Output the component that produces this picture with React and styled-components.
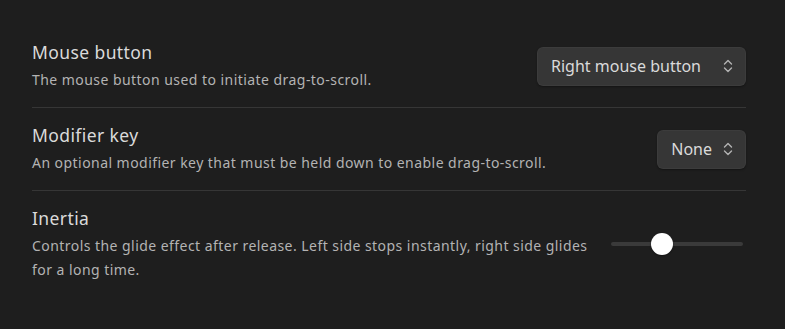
import React, { useState } from 'react';
import styled, { createGlobalStyle } from 'styled-components';

const GlobalStyle = createGlobalStyle`
    html, body {
        margin: 0;
        padding: 0;
        background: #1e1e1e;
    }
    body {
        font-family: "Noto Sans", "Open Sans", sans-serif;
        -webkit-font-smoothing: antialiased;
    }
`;

const Page = styled.div`
    width: 785px;
    height: 329px;
    box-sizing: border-box;
    padding: 25px 39px 0 32px;
    background: #1e1e1e;
`;

const Item = styled.div`
    display: flex;
    align-items: center;
    justify-content: space-between;
    padding: 15px 0;
    border-top: ${p => (p.$first ? 'none' : '1px solid #363636')};
`;

const Info = styled.div`
    flex: 1;
    max-width: 570px;
    margin-right: 4px;
`;

const Name = styled.div`
    color: #dadada;
    font-size: 17.5px;
    letter-spacing: 0.4px;
    line-height: 24px;
    margin-bottom: 4px;
`;

const Description = styled.div`
    color: #b3b3b3;
    font-size: 14px;
    letter-spacing: 0.45px;
    line-height: 24px;
`;

const Select = styled.div`
    display: flex;
    align-items: center;
    gap: ${p => p.$gap}px;
    height: 39px;
    box-sizing: border-box;
    padding: 0 13px 0 14px;
    background: #363636;
    border-radius: 6px;
    box-shadow: 0 1px 2px rgba(0, 0, 0, 0.35), inset 0 0 0 1px rgba(255, 255, 255, 0.03);
    color: #dadada;
    font-size: 16px;
    white-space: nowrap;
`;

const Track = styled.div`
    position: relative;
    flex: none;
    width: 132px;
    height: 4px;
    margin-right: 3px;
    border-radius: 2px;
    background: #3a3a3a;
`;

const Thumb = styled.div`
    position: absolute;
    top: 50%;
    width: 22px;
    height: 22px;
    border-radius: 50%;
    background: #ffffff;
    transform: translate(-50%, -50%);
    box-shadow: 0 1px 2px rgba(0, 0, 0, 0.4);
`;

function Chevrons() {
    return (
        <svg width="10" height="14" viewBox="0 0 10 14" fill="none" stroke="#b3b3b3" strokeWidth="1.4" strokeLinecap="round" strokeLinejoin="round">
            <path d="M1.5 5 L5 1.5 L8.5 5" />
            <path d="M1.5 9 L5 12.5 L8.5 9" />
        </svg>
    );
}

function App() {
    const [inertia] = useState(0.39);

    return (
        <Page>
            <GlobalStyle />
            <Item $first>
                <Info>
                    <Name>Mouse button</Name>
                    <Description>The mouse button used to initiate drag-to-scroll.</Description>
                </Info>
                <Select $gap={22}>Right mouse button <Chevrons /></Select>
            </Item>
            <Item>
                <Info>
                    <Name>Modifier key</Name>
                    <Description>An optional modifier key that must be held down to enable drag-to-scroll.</Description>
                </Info>
                <Select $gap={11}>None <Chevrons /></Select>
            </Item>
            <Item>
                <Info>
                    <Name>Inertia</Name>
                    <Description>Controls the glide effect after release. Left side stops instantly, right side glides for a long time.</Description>
                </Info>
                <Track>
                    <Thumb style={{ left: `${inertia * 100}%` }} />
                </Track>
            </Item>
        </Page>
    );
}

export default App;
